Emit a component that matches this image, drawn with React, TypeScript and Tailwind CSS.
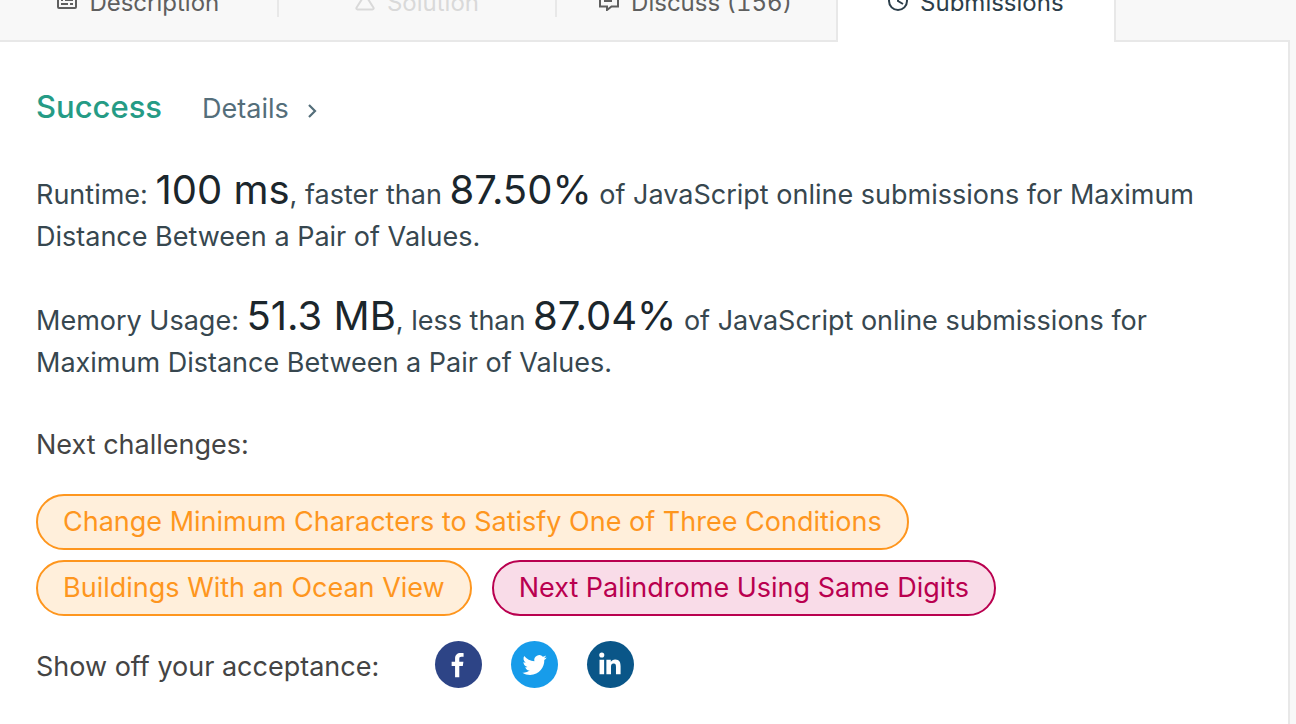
import type { ReactNode } from "react";

type Tab = { label: string; icon: ReactNode; tone: string; divider: string };
type Challenge = { title: string; level: "medium" | "hard" };

const iconProps = {
  viewBox: "0 0 20 20",
  className: "-mt-1 size-5 shrink-0",
  fill: "none",
  stroke: "currentColor",
  strokeWidth: 2,
  "aria-hidden": true,
} as const;

function DescriptionIcon() {
  return (
    <svg {...iconProps}>
      <rect x="1" y="1" width="18" height="16" rx="1" />
      <path d="M4 5h12M4 9h2M8 9h8M4 13h7M13 13h3" />
    </svg>
  );
}

function SolutionIcon() {
  return (
    <svg {...iconProps}>
      <path d="M8 6.5L1.6 16.5c-.6 1 0 2 1 2h14.8c1 0 1.6-1 1-2L12 6.5M8 7V1M12 7V1M6 1h8" />
    </svg>
  );
}

function DiscussIcon() {
  return (
    <svg {...iconProps}>
      <path d="M1 1h18v14.5h-6.5L8 19v-3.5H1z" />
      <path d="M5 5.5h10M5 10h8" />
    </svg>
  );
}

function ClockIcon() {
  return (
    <svg {...iconProps}>
      <circle cx="10" cy="10" r="9" />
      <path d="M10 4v6l5 3" />
    </svg>
  );
}

const tabs: Tab[] = [
  { label: "Description", icon: <DescriptionIcon />, tone: "text-[#5f5f5f]", divider: "border-[#e8e8e8]" },
  { label: "Solution", icon: <SolutionIcon />, tone: "text-[#d9d9d9]", divider: "border-[#e8e8e8]" },
  { label: "Discuss (156)", icon: <DiscussIcon />, tone: "text-[#5f5f5f]", divider: "border-transparent" },
];

const challenges: Challenge[] = [
  { title: "Change Minimum Characters to Satisfy One of Three Conditions", level: "medium" },
  { title: "Buildings With an Ocean View", level: "medium" },
  { title: "Next Palindrome Using Same Digits", level: "hard" },
];

const levelStyles = {
  medium: "border-[#fe961e] bg-[#ffefdb] text-[#fe961e]",
  hard: "border-[#b9004f] bg-[#f9dce8] text-[#b9004f]",
};

const socials = [
  {
    name: "Facebook",
    color: "bg-[#2d4486]",
    path: "M20.5 37V25.5H17v-4.3h3.5v-3.4c0-3.7 2.3-5.6 5.5-5.6 1.5 0 2.8.1 3.2.2v3.8H27c-1.8 0-2.2.9-2.2 2.1v2.9h4.2l-.6 4.3h-3.6V37z",
  },
  {
    name: "Twitter",
    color: "bg-[#179cea]",
    path: "M36.5 16.8c-.9.4-1.9.7-2.9.8 1-.6 1.8-1.6 2.2-2.8-1 .6-2.1 1-3.2 1.2a5.1 5.1 0 0 0-8.7 4.6c-4.2-.2-7.9-2.2-10.4-5.3-1.4 2.4-.7 5.3 1.5 6.8-.8 0-1.6-.2-2.3-.6 0 2.5 1.7 4.6 4.1 5.1-.7.2-1.5.2-2.3.1.6 2 2.5 3.5 4.7 3.5a10.3 10.3 0 0 1-7.5 2.1c2.3 1.5 5 2.3 7.8 2.3 9.5 0 14.8-8 14.5-15.2 1-.7 1.8-1.6 2.5-2.6z",
  },
  {
    name: "LinkedIn",
    color: "bg-[#0a5688]",
    path: "M12.8 19.2h4.7V34h-4.7zM15.1 11.7a2.6 2.6 0 1 1 0 5.2 2.6 2.6 0 0 1 0-5.2zM19.8 19.2h4.5v2c.8-1.4 2.3-2.4 4.5-2.4 4.6 0 5.5 3 5.5 7V34h-4.7v-7.3c0-1.9-.1-3.7-2.4-3.7s-2.7 1.6-2.7 3.6V34h-4.7z",
  },
];

function Figure({ children }: { children: ReactNode }) {
  return <span className="text-[40px] leading-none text-[#1b262c]">{children}</span>;
}

export default function App() {
  return (
    <div className="min-h-screen bg-[#f8f8f8] pr-1.5 font-['Inter',sans-serif] text-[27px] leading-[42px]">
      {/* tab strip, scrolled halfway out of view */}
      <header className="flex h-[42px] flex-col justify-end overflow-hidden">
        <nav className="flex h-[84px] shrink-0 text-2xl tabular-nums">
          {tabs.map((tab) => (
            <button
              key={tab.label}
              type="button"
              className={`flex w-[21.6%] items-center border-b-2 border-[#e8e8e8] ${tab.tone}`}
            >
              <span className={`flex h-9 flex-1 items-center justify-center gap-3 border-r-2 pt-2 ${tab.divider}`}>
                {tab.icon}
                {tab.label}
              </span>
            </button>
          ))}
          <button type="button" className="flex w-[21.7%] items-center justify-center gap-3 border-x-2 border-[#e8e8e8] bg-white pt-1.5 text-[#2c3e4a]">
            <ClockIcon />
            Submissions
          </button>
          <div className="flex-1 border-b-2 border-[#e8e8e8]" />
        </nav>
      </header>

      <main className="min-h-[calc(100vh-42px)] border-r-2 border-[#e8e8e8] bg-white px-9 pt-11">
        <div className="flex items-baseline gap-10">
          <h1 className="text-[31px] font-medium text-[#259b85]">Success</h1>
          <a href="#details" className="flex items-center gap-4 text-[#546e7a]">
            Details
            <svg viewBox="0 0 12 16" className="mt-1 h-4 w-3" fill="none" stroke="currentColor" strokeWidth="2.2" aria-hidden="true">
              <path d="M4 2l6 6-6 6" />
            </svg>
          </a>
        </div>

        <p className="mt-10 text-[#37474f]">
          Runtime: <Figure>100 ms</Figure>, faster than <Figure>87.50%</Figure> of JavaScript online submissions for
          Maximum Distance Between a Pair of Values.
        </p>
        <p className="mt-[38px] text-[#37474f]">
          Memory Usage: <Figure>51.3 MB</Figure>, less than <Figure>87.04%</Figure> of JavaScript online submissions for
          Maximum Distance Between a Pair of Values.
        </p>

        <h2 className="mt-10 text-[#444444]">Next challenges:</h2>
        <div className="mt-7 flex max-w-[1000px] flex-wrap gap-x-5 gap-y-2.5">
          {challenges.map((item) => (
            <a key={item.title} href="#challenge" className={`flex h-14 items-center rounded-full border-2 px-[25px] ${levelStyles[item.level]}`}>
              {item.title}
            </a>
          ))}
        </div>

        <div className="mt-[25px] flex items-end text-[#444444]">
          <span className="mr-14">Show off your acceptance:</span>
          <div className="flex gap-[29px]">
            {socials.map((social) => (
              <button key={social.name} type="button" aria-label={social.name} className={`size-[47px] rounded-full text-white ${social.color}`}>
                <svg viewBox="0 0 48 48" className="size-full" fill="currentColor" aria-hidden="true">
                  <path d={social.path} />
                </svg>
              </button>
            ))}
          </div>
        </div>
      </main>
    </div>
  );
}
